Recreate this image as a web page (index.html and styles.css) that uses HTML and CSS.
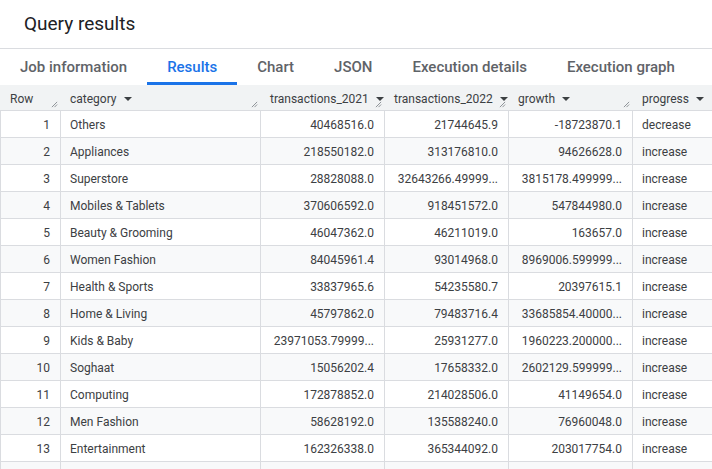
FILE: index.html
```html
<!DOCTYPE html>
<html>
<head>
<meta charset="utf-8">
<link rel="stylesheet" href="styles.css">
</head>
<body>
<div class="page">
  <header class="title-bar"><h1 class="title">Query results</h1></header>
  <nav class="tabs">
    <div class="tab">Job information</div>
    <div class="tab active">Results</div>
    <div class="tab">Chart</div>
    <div class="tab">JSON</div>
    <div class="tab">Execution details</div>
    <div class="tab">Execution graph</div>
  </nav>
  <div class="grid">
    <div class="hcell"><span class="hlabel">Row</span><svg class="handle" viewBox="0 0 8 8"><path d="M1 7 L7 1 M4 7 L7 4"/></svg></div>
    <div class="hcell"><span class="hlabel">category</span><svg class="caret" viewBox="0 0 10 5"><path d="M0 0 H10 L5 5 Z"/></svg><svg class="handle" viewBox="0 0 8 8"><path d="M1 7 L7 1 M4 7 L7 4"/></svg></div>
    <div class="hcell"><span class="hlabel">transactions_2021</span><svg class="caret" viewBox="0 0 10 5"><path d="M0 0 H10 L5 5 Z"/></svg><svg class="handle" viewBox="0 0 8 8"><path d="M1 7 L7 1 M4 7 L7 4"/></svg></div>
    <div class="hcell"><span class="hlabel">transactions_2022</span><svg class="caret" viewBox="0 0 10 5"><path d="M0 0 H10 L5 5 Z"/></svg><svg class="handle" viewBox="0 0 8 8"><path d="M1 7 L7 1 M4 7 L7 4"/></svg></div>
    <div class="hcell"><span class="hlabel">growth</span><svg class="caret" viewBox="0 0 10 5"><path d="M0 0 H10 L5 5 Z"/></svg><svg class="handle" viewBox="0 0 8 8"><path d="M1 7 L7 1 M4 7 L7 4"/></svg></div>
    <div class="hcell"><span class="hlabel">progress</span><svg class="caret" viewBox="0 0 10 5"><path d="M0 0 H10 L5 5 Z"/></svg></div>

    <div class="cell num">1</div><div class="cell">Others</div><div class="cell num">40468516.0</div><div class="cell num">21744645.9</div><div class="cell num">-18723870.1</div><div class="cell">decrease</div>
    <div class="cell alt num">2</div><div class="cell alt">Appliances</div><div class="cell alt num">218550182.0</div><div class="cell alt num">313176810.0</div><div class="cell alt num">94626628.0</div><div class="cell alt">increase</div>
    <div class="cell num">3</div><div class="cell">Superstore</div><div class="cell num">28828088.0</div><div class="cell num">32643266.49999...</div><div class="cell num">3815178.499999...</div><div class="cell">increase</div>
    <div class="cell alt num">4</div><div class="cell alt">Mobiles &amp; Tablets</div><div class="cell alt num">370606592.0</div><div class="cell alt num">918451572.0</div><div class="cell alt num">547844980.0</div><div class="cell alt">increase</div>
    <div class="cell num">5</div><div class="cell">Beauty &amp; Grooming</div><div class="cell num">46047362.0</div><div class="cell num">46211019.0</div><div class="cell num">163657.0</div><div class="cell">increase</div>
    <div class="cell alt num">6</div><div class="cell alt">Women Fashion</div><div class="cell alt num">84045961.4</div><div class="cell alt num">93014968.0</div><div class="cell alt num">8969006.599999...</div><div class="cell alt">increase</div>
    <div class="cell num">7</div><div class="cell">Health &amp; Sports</div><div class="cell num">33837965.6</div><div class="cell num">54235580.7</div><div class="cell num">20397615.1</div><div class="cell">increase</div>
    <div class="cell alt num">8</div><div class="cell alt">Home &amp; Living</div><div class="cell alt num">45797862.0</div><div class="cell alt num">79483716.4</div><div class="cell alt num">33685854.40000...</div><div class="cell alt">increase</div>
    <div class="cell num">9</div><div class="cell">Kids &amp; Baby</div><div class="cell num">23971053.79999...</div><div class="cell num">25931277.0</div><div class="cell num">1960223.200000...</div><div class="cell">increase</div>
    <div class="cell alt num">10</div><div class="cell alt">Soghaat</div><div class="cell alt num">15056202.4</div><div class="cell alt num">17658332.0</div><div class="cell alt num">2602129.599999...</div><div class="cell alt">increase</div>
    <div class="cell num">11</div><div class="cell">Computing</div><div class="cell num">172878852.0</div><div class="cell num">214028506.0</div><div class="cell num">41149654.0</div><div class="cell">increase</div>
    <div class="cell alt num">12</div><div class="cell alt">Men Fashion</div><div class="cell alt num">58628192.0</div><div class="cell alt num">135588240.0</div><div class="cell alt num">76960048.0</div><div class="cell alt">increase</div>
    <div class="cell num">13</div><div class="cell">Entertainment</div><div class="cell num">162326338.0</div><div class="cell num">365344092.0</div><div class="cell num">203017754.0</div><div class="cell">increase</div>
    <div class="cell alt num"></div><div class="cell alt"></div><div class="cell alt num"></div><div class="cell alt num"></div><div class="cell alt num"></div><div class="cell alt"></div>
  </div>
</div>
</body>
</html>
```
FILE: styles.css
```css
html, body {
  margin: 0;
  padding: 0;
  background: #ffffff;
  overflow: hidden;
}
body {
  font-family: Roboto, "Liberation Sans", sans-serif;
  color: #202124;
}
.page {
  width: 712px;
  height: 469px;
  overflow: hidden;
}
.title-bar {
  height: 49px;
  border-bottom: 1px solid #dadce0;
  box-sizing: border-box;
  display: flex;
  align-items: center;
  padding-left: 24px;
  padding-bottom: 2px;
}
.title {
  margin: 0;
  font-size: 19px;
  font-weight: 400;
  color: #202124;
}
.tabs {
  display: flex;
  height: 36px;
  box-sizing: border-box;
}
.tab {
  padding: 2px 20px 0;
  display: flex;
  align-items: center;
  font-size: 15px;
  font-weight: 500;
  color: #5f6368;
  border-bottom: 3px solid transparent;
  white-space: nowrap;
}
.tab.active {
  color: #1a73e8;
  border-bottom-color: #1a73e8;
}
.grid {
  display: grid;
  grid-template-columns: 60px 200px 124px 124px 124px 124px;
  grid-auto-rows: 27px;
  grid-template-rows: 26px;
  font-size: 12px;
}
.hcell {
  background: #f1f3f4;
  border-bottom: 1px solid #dadce0;
  box-sizing: border-box;
  display: flex;
  align-items: center;
  padding: 2px 10px 0;
  position: relative;
  color: #3c4043;
  white-space: nowrap;
}
.hlabel {
  font-size: 12px;
}
.caret {
  width: 8px;
  height: 4px;
  margin-left: 7px;
  fill: #3c4043;
  flex: none;
}
.handle {
  position: absolute;
  right: 2px;
  bottom: 2px;
  width: 7px;
  height: 7px;
  stroke: #80868b;
  stroke-width: 1;
  fill: none;
}
.cell {
  box-sizing: border-box;
  border-left: 1px solid #dadce0;
  border-bottom: 1px solid #dadce0;
  display: flex;
  align-items: center;
  padding: 2px 10px 0 9px;
  color: #3c4043;
  white-space: nowrap;
  overflow: hidden;
}
.cell.num {
  justify-content: flex-end;
}
.cell.alt {
  background: #f8f9fa;
}
```
